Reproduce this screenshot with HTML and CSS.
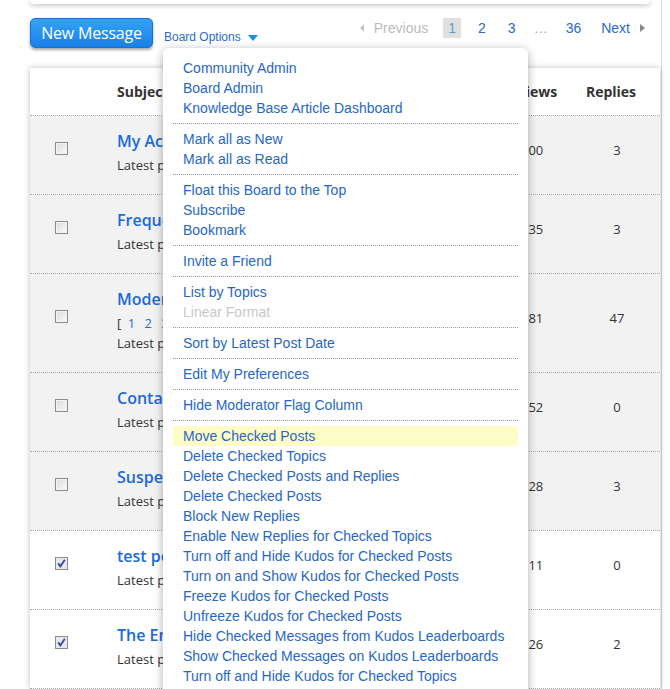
FILE: index.html
```html
<!DOCTYPE html>
<html lang="en">
<head>
<meta charset="utf-8">
<title>Board</title>
<link rel="stylesheet" href="styles.css">
</head>
<body>
<div class="page">
  <div class="top-card"></div>

  <div class="toolbar">
    <a class="btn-new" href="#">New Message</a>
    <div class="options">
      <span class="options-label">Board Options</span><span class="caret"></span>
      <div class="menu">
        <div class="menu-group">
          <a href="#">Community Admin</a>
          <a href="#">Board Admin</a>
          <a href="#">Knowledge Base Article Dashboard</a>
        </div>
        <div class="sep"></div>
        <div class="menu-group">
          <a href="#">Mark all as New</a>
          <a href="#">Mark all as Read</a>
        </div>
        <div class="sep"></div>
        <div class="menu-group">
          <a href="#">Float this Board to the Top</a>
          <a href="#">Subscribe</a>
          <a href="#">Bookmark</a>
        </div>
        <div class="sep"></div>
        <div class="menu-group">
          <a href="#">Invite a Friend</a>
        </div>
        <div class="sep"></div>
        <div class="menu-group">
          <a href="#">List by Topics</a>
          <span class="disabled">Linear Format</span>
        </div>
        <div class="sep"></div>
        <div class="menu-group">
          <a href="#">Sort by Latest Post Date</a>
        </div>
        <div class="sep"></div>
        <div class="menu-group">
          <a href="#">Edit My Preferences</a>
        </div>
        <div class="sep"></div>
        <div class="menu-group">
          <a href="#">Hide Moderator Flag Column</a>
        </div>
        <div class="sep"></div>
        <div class="menu-group">
          <a href="#" class="hl">Move Checked Posts</a>
          <a href="#">Delete Checked Topics</a>
          <a href="#">Delete Checked Posts and Replies</a>
          <a href="#">Delete Checked Posts</a>
          <a href="#">Block New Replies</a>
          <a href="#">Enable New Replies for Checked Topics</a>
          <a href="#">Turn off and Hide Kudos for Checked Posts</a>
          <a href="#">Turn on and Show Kudos for Checked Posts</a>
          <a href="#">Freeze Kudos for Checked Posts</a>
          <a href="#">Unfreeze Kudos for Checked Posts</a>
          <a href="#">Hide Checked Messages from Kudos Leaderboards</a>
          <a href="#">Show Checked Messages on Kudos Leaderboards</a>
          <a href="#">Turn off and Hide Kudos for Checked Topics</a>
        </div>
      </div>
    </div>

    <nav class="pager">
      <span class="prev"><span class="tri-left"></span>Previous</span>
      <span class="num current">1</span>
      <a class="num" href="#">2</a>
      <a class="num" href="#">3</a>
      <span class="dots">…</span>
      <a class="num" href="#">36</a>
      <a class="next" href="#">Next<span class="tri-right"></span></a>
    </nav>
  </div>

  <div class="board">
    <div class="row head">
      <div></div>
      <div class="h-subject">Subject</div>
      <div class="h-views">Views</div>
      <div class="h-replies">Replies</div>
    </div>

    <div class="row read">
      <div class="cell-check"><span class="cb"></span></div>
      <div class="subject">
        <a class="title" href="#">My Account &amp; Profile</a>
        <div class="latest">Latest post 2 weeks ago by Admin</div>
      </div>
      <div class="views">100</div>
      <div class="replies">3</div>
    </div>

    <div class="row read">
      <div class="cell-check"><span class="cb"></span></div>
      <div class="subject">
        <a class="title" href="#">Frequently Asked Questions</a>
        <div class="latest">Latest post a month ago by Admin</div>
      </div>
      <div class="views">235</div>
      <div class="replies">3</div>
    </div>

    <div class="row read">
      <div class="cell-check"><span class="cb"></span></div>
      <div class="subject">
        <a class="title" href="#">Moderator Guidelines</a>
        <div class="pages">[ <a href="#">1</a> <a href="#">2</a> <a href="#">3</a> ]</div>
        <div class="latest latest-tight">Latest post 3 days ago by Moderator</div>
      </div>
      <div class="views">181</div>
      <div class="replies">47</div>
    </div>

    <div class="row read">
      <div class="cell-check"><span class="cb"></span></div>
      <div class="subject">
        <a class="title" href="#">Contact Us</a>
        <div class="latest">Latest post a year ago by Admin</div>
      </div>
      <div class="views">752</div>
      <div class="replies">0</div>
    </div>

    <div class="row read">
      <div class="cell-check"><span class="cb"></span></div>
      <div class="subject">
        <a class="title" href="#">Suspended Accounts</a>
        <div class="latest">Latest post 5 months ago by Admin</div>
      </div>
      <div class="views">128</div>
      <div class="replies">3</div>
    </div>

    <div class="row">
      <div class="cell-check">
        <svg class="cb-svg" width="13" height="13" viewBox="0 0 13 13">
          <rect x="0.5" y="0.5" width="12" height="12" fill="#e6e8ee" stroke="#8c8c8c"/>
          <path d="M3.2 6.4 L5.4 9.4 L9.8 2.8" fill="none" stroke="#2f4794" stroke-width="1.8"/>
        </svg>
      </div>
      <div class="subject">
        <a class="title" href="#">test post</a>
        <div class="latest">Latest post yesterday by Moderator</div>
      </div>
      <div class="views">111</div>
      <div class="replies">0</div>
    </div>

    <div class="row">
      <div class="cell-check">
        <svg class="cb-svg" width="13" height="13" viewBox="0 0 13 13">
          <rect x="0.5" y="0.5" width="12" height="12" fill="#e6e8ee" stroke="#8c8c8c"/>
          <path d="M3.2 6.4 L5.4 9.4 L9.8 2.8" fill="none" stroke="#2f4794" stroke-width="1.8"/>
        </svg>
      </div>
      <div class="subject">
        <a class="title" href="#">The End of Support</a>
        <div class="latest">Latest post 2 days ago by Admin</div>
      </div>
      <div class="views">126</div>
      <div class="replies">2</div>
    </div>
  </div>
</div>
</body>
</html>
```

FILE: styles.css
```css
* {
  box-sizing: border-box;
}

html,
body {
  margin: 0;
  padding: 0;
  background: #fff;
}

body {
  overflow: hidden;
  font-family: "Open Sans", "Liberation Sans", Arial, sans-serif;
  color: #333;
}

a {
  text-decoration: none;
}

.page {
  width: 662px;
  min-height: 689px;
  border-right: 1px solid #dcdcdc;
}

/* tail of the card above the toolbar */
.top-card {
  margin-left: 30px;
  width: 620px;
  height: 4px;
  background: #fff;
  border-radius: 0 0 3px 3px;
  box-shadow: 0 1px 5px rgba(0, 0, 0, 0.3);
}

/* toolbar: button, options, pager */
.toolbar {
  display: flex;
  align-items: flex-start;
  height: 30px;
  margin-top: 14px;
  padding: 0 16px 0 30px;
}

.btn-new {
  display: block;
  width: 123px;
  height: 30px;
  border: 1px solid #1a6fd0;
  border-radius: 5px;
  background: linear-gradient(#34a2f8, #1a80e6);
  box-shadow: 0 2px 3px rgba(0, 0, 0, 0.35);
  color: #fff;
  font-size: 16px;
  line-height: 28px;
  text-align: center;
  letter-spacing: -0.2px;
}

.options {
  position: relative;
  display: flex;
  align-items: center;
  align-self: flex-end;
  margin: 0 0 3px 11px;
  font-family: "Liberation Sans", Arial, sans-serif;
  font-size: 12px;
  line-height: 16px;
  color: #2a6bc8;
}

.caret {
  width: 0;
  height: 0;
  margin-left: 7px;
  margin-top: 2px;
  border-left: 5px solid transparent;
  border-right: 5px solid transparent;
  border-top: 6px solid #1a90e8;
}

/* dropdown */
.menu {
  position: absolute;
  left: -1px;
  top: 19px;
  z-index: 10;
  width: 365px;
  padding: 10px 10px 14px;
  background: #fff;
  border-radius: 6px;
  box-shadow: 0 2px 10px rgba(0, 0, 0, 0.32);
}

.menu-group a,
.menu-group .disabled {
  display: block;
  padding-left: 10px;
  font-family: "Liberation Sans", Arial, sans-serif;
  font-size: 14px;
  line-height: 20px;
  color: #2767c5;
  white-space: nowrap;
}

.menu-group .disabled {
  color: #c8c8c8;
}

.menu-group .hl {
  background: #fffcc8;
}

.sep {
  margin: 5px 0;
  border-top: 1px dotted #999;
}

/* pager */
.pager {
  display: flex;
  align-items: center;
  gap: 12px;
  height: 20px;
  margin-left: auto;
  font-family: "Liberation Sans", Arial, sans-serif;
  font-size: 14px;
  line-height: 20px;
}

.prev {
  display: flex;
  align-items: center;
  color: #bcbcbc;
  margin-right: 3px;
}

.tri-left {
  width: 0;
  height: 0;
  margin-right: 10px;
  border-top: 4px solid transparent;
  border-bottom: 4px solid transparent;
  border-right: 4px solid #c4c4c4;
}

.num {
  padding: 0 5px;
  color: #2a6bc8;
}

.num.current {
  background: #e0e0e0;
  color: #5e9ad8;
}

.dots {
  color: #aaa;
  padding: 0 1px;
}

.next {
  display: flex;
  align-items: center;
  color: #2a6bc8;
  margin-left: 3px;
}

.tri-right {
  width: 0;
  height: 0;
  margin-left: 10px;
  border-top: 4px solid transparent;
  border-bottom: 4px solid transparent;
  border-left: 5px solid #888;
}

/* message list */
.board {
  width: 630px;
  margin: 20px 0 0 30px;
  background: #fff;
  box-shadow: 0 0 6px rgba(0, 0, 0, 0.25);
}

.row {
  display: grid;
  grid-template-columns: 62px 1fr 80px 80px;
  padding-right: 3px;
  border-bottom: 1px dotted #a8a8a8;
  background: #fff;
}

.row.read {
  background: #f2f2f2;
}

.head {
  height: 48px;
  align-items: center;
  font-size: 14px;
  font-weight: 700;
  color: #333;
}

.h-subject {
  padding-left: 25px;
}

.h-views {
  text-align: center;
}

.h-replies {
  text-align: center;
  padding-right: 12px;
}

.cell-check {
  display: flex;
  justify-content: center;
  align-self: center;
  margin-bottom: 14px;
}

.cb {
  display: block;
  width: 13px;
  height: 13px;
  border: 1px solid #8c8c8c;
  background: linear-gradient(135deg, #d9d9d9, #fbfbfb);
  box-shadow: inset 0 0 0 1px #f4f4f4;
}

.cb-svg {
  display: block;
}

.subject {
  padding: 14px 0 19px 25px;
  white-space: nowrap;
  overflow: hidden;
}

.title {
  display: block;
  font-size: 16px;
  font-weight: 600;
  line-height: 22px;
  color: #1a6ad8;
}

.latest {
  margin-top: 3px;
  font-size: 13px;
  line-height: 20px;
  color: #333;
}

.latest-tight {
  margin-top: 0;
}

.pages {
  margin-top: 3px;
  font-size: 13px;
  line-height: 20px;
  color: #333;
}

.pages a {
  color: #2a6bc8;
  margin: 0 3px;
}

.views,
.replies {
  align-self: center;
  padding-bottom: 10px;
  font-size: 13px;
  color: #333;
}

.views {
  padding-left: 24px;
}

.replies {
  text-align: center;
}
```
